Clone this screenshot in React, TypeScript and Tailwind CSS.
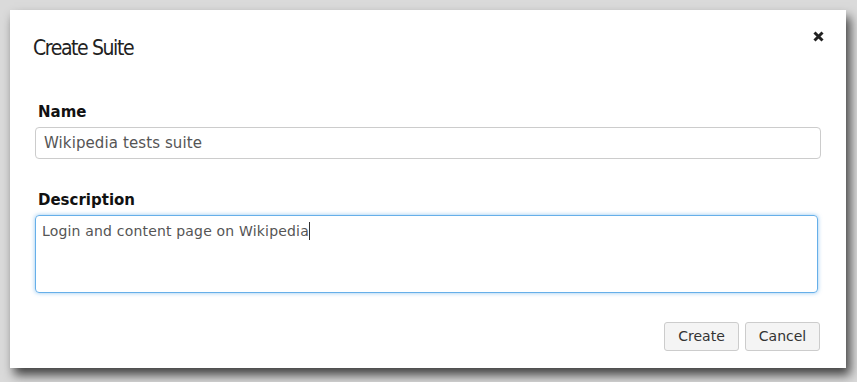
import React from "react";

export default function App() {
  return (
    <div className="w-[857px] h-[382px] bg-[#dadada] pt-[10px] pl-[10px] overflow-hidden" style={{ fontFamily: '"DejaVu Sans", Verdana, sans-serif' }}>
      <div className="w-[836px] h-[358px] bg-white flex flex-col shadow-[4px_7px_10px_rgba(0,0,0,0.7)]">
        <div className="flex justify-between items-start pt-[26px] pl-[23px] pr-[22px]">
          <h2 className="text-[21px] leading-[24px] text-[#222] tracking-[-1.4px]" style={{ fontFamily: '"Liberation Sans Narrow", "DejaVu Sans Condensed", sans-serif' }}>
            Create Suite
          </h2>
          <button className="mt-[-6px] w-[12px] h-[12px] flex items-center justify-center">
            <svg width="11" height="11" viewBox="0 0 11 11">
              <path d="M1.5 1.5 L9.5 9.5 M9.5 1.5 L1.5 9.5" stroke="#222" strokeWidth="3" strokeLinecap="butt" />
            </svg>
          </button>
        </div>
        <div className="px-[25px] pt-[42px] flex flex-col">
          <label className="pl-[3px] text-[15px] leading-[20px] font-bold text-[#111]">Name</label>
          <div className="mt-[5px] h-[32px] w-[786px] border border-[#ccc] rounded-[4px] px-[8px] flex items-center text-[15px] tracking-[0.1px] text-[#555]">
            Wikipedia tests suite
          </div>
          <label className="mt-[31px] pl-[3px] text-[15px] leading-[20px] font-bold text-[#111]">Description</label>
          <div className="mt-[5px] h-[78px] w-[783px] border border-[#66afe9] rounded-[4px] px-[6px] pt-[5px] text-[14px] leading-[20px] tracking-[0.18px] text-[#555] shadow-[0_0_4px_rgba(102,175,233,0.7)]">
            Login and content page on Wikipedia<span className="inline-block w-px h-[18px] bg-[#333] align-[-4px]" />
          </div>
          <div className="mt-[29px] flex justify-end gap-[6px] pr-[1px]">
            <button className="w-[75px] h-[29px] bg-[#f4f4f4] border border-[#ccc] rounded-[3px] text-[14px] text-[#333]">Create</button>
            <button className="w-[75px] h-[29px] bg-[#f4f4f4] border border-[#ccc] rounded-[3px] text-[14px] text-[#333]">Cancel</button>
          </div>
        </div>
      </div>
    </div>
  );
}
